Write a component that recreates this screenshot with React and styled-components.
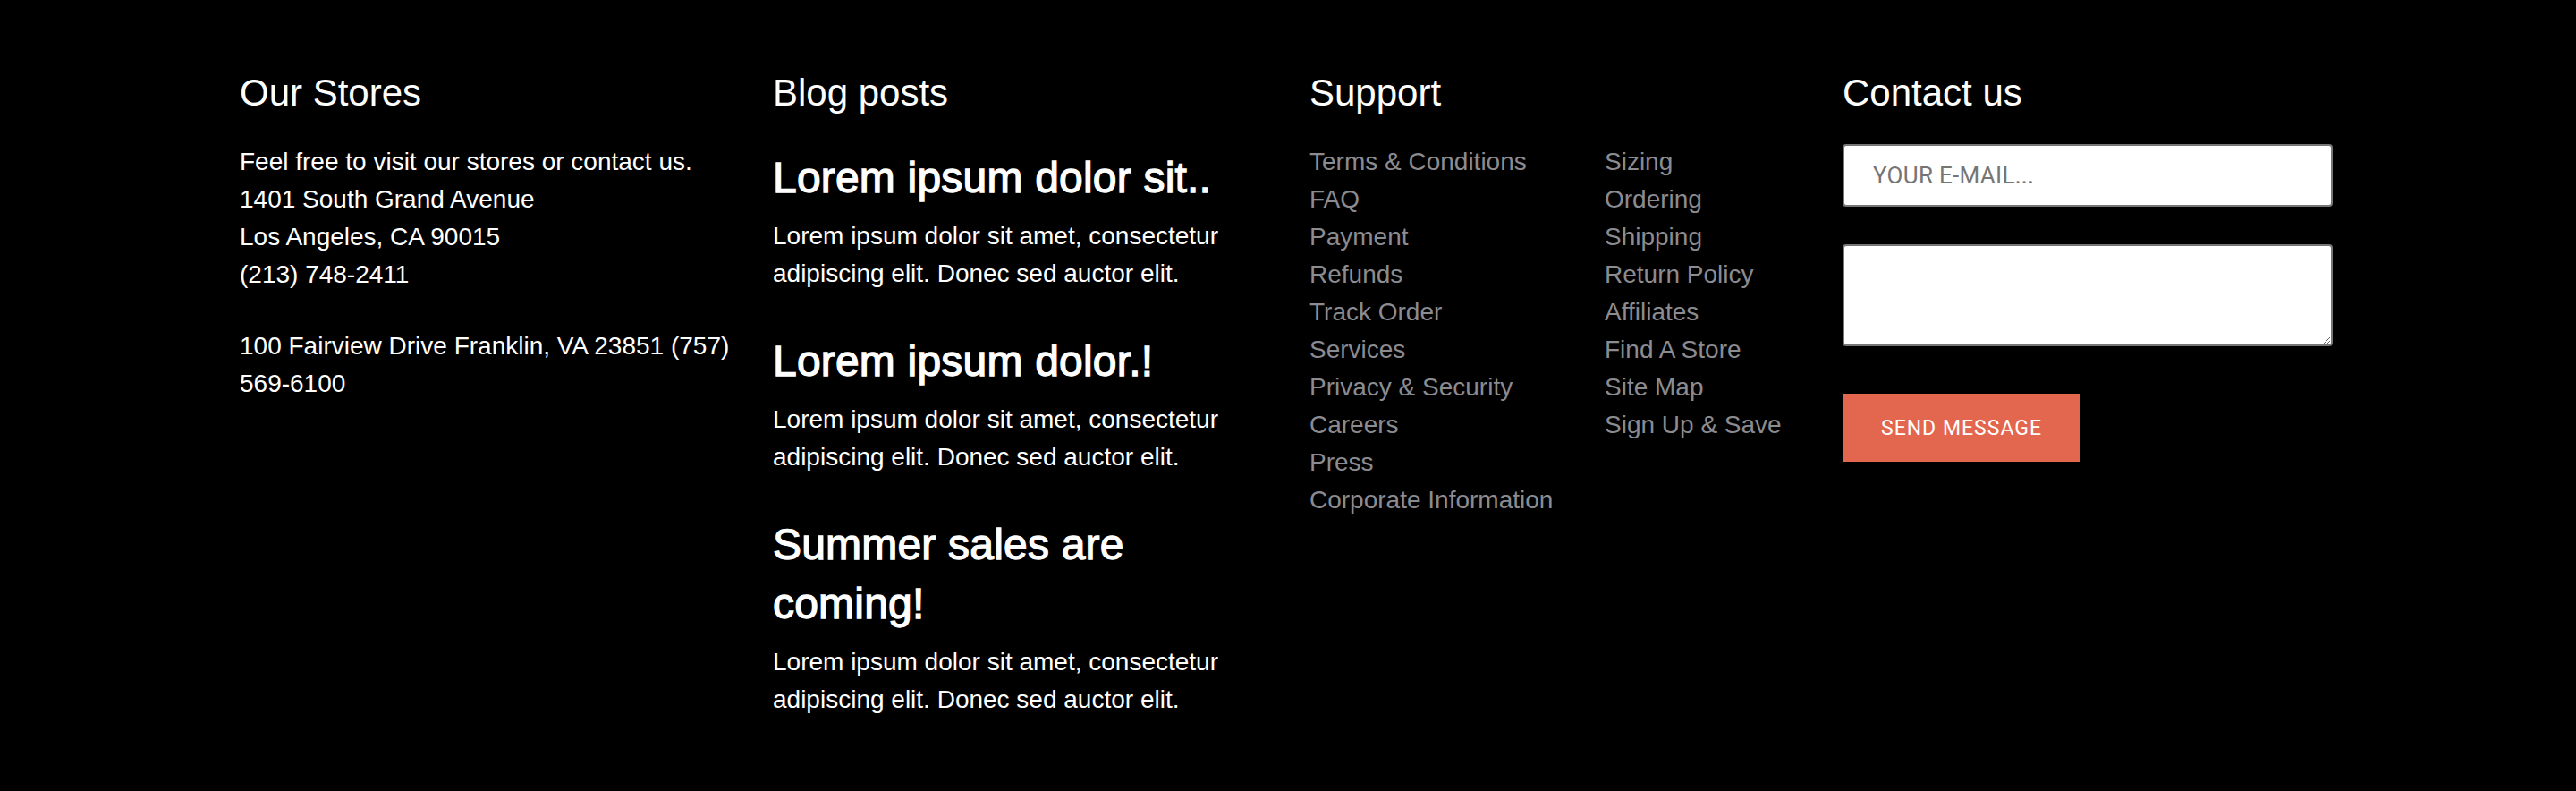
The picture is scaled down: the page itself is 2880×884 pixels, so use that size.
import React from 'react';
import styled, { createGlobalStyle } from 'styled-components';

const GlobalStyle = createGlobalStyle`
  html, body {
    margin: 0;
    padding: 0;
    background: #000;
  }
  body {
    font-family: 'Liberation Sans', Arial, sans-serif;
    color: #fff;
  }
`;

const stores = [
  'Feel free to visit our stores or contact us.',
  '1401 South Grand Avenue',
  'Los Angeles, CA 90015',
  '(213) 748-2411',
];

const posts = [
  'Lorem ipsum dolor sit..',
  'Lorem ipsum dolor.!',
  'Summer sales are coming!',
];

const supportLeft = [
  'Terms & Conditions',
  'FAQ',
  'Payment',
  'Refunds',
  'Track Order',
  'Services',
  'Privacy & Security',
  'Careers',
  'Press',
  'Corporate Information',
];

const supportRight = [
  'Sizing',
  'Ordering',
  'Shipping',
  'Return Policy',
  'Affiliates',
  'Find A Store',
  'Site Map',
  'Sign Up & Save',
];

const App = () => {
  return (
    <>
      <GlobalStyle />
      <Footer>
        <Columns>
          <Column>
            <Heading>Our Stores</Heading>
            <Text>
              {stores.map((line) => (
                <span key={line}>
                  {line}
                  <br />
                </span>
              ))}
            </Text>
            <Text spaced>100 Fairview Drive Franklin, VA 23851 (757) 569-6100</Text>
          </Column>

          <Column>
            <Heading>Blog posts</Heading>
            {posts.map((title, i) => (
              <Post key={title} first={i === 0}>
                <PostTitle>{title}</PostTitle>
                <Text>
                  Lorem ipsum dolor sit amet, consectetur adipiscing elit. Donec sed
                  auctor elit.
                </Text>
              </Post>
            ))}
          </Column>

          <Column>
            <Heading>Support</Heading>
            <LinkGrid>
              <LinkList>
                {supportLeft.map((l) => (
                  <li key={l}>
                    <a href='#'>{l}</a>
                  </li>
                ))}
              </LinkList>
              <LinkList>
                {supportRight.map((l) => (
                  <li key={l}>
                    <a href='#'>{l}</a>
                  </li>
                ))}
              </LinkList>
            </LinkGrid>
          </Column>

          <Column>
            <Heading>Contact us</Heading>
            <Form onSubmit={(e) => e.preventDefault()}>
              <Input type='email' placeholder='YOUR E-MAIL...' />
              <Message />
              <Button type='submit'>SEND MESSAGE</Button>
            </Form>
          </Column>
        </Columns>
      </Footer>
    </>
  );
};

export default App;

const Footer = styled.footer`
  background: #000;
  min-height: 884px;
  box-sizing: border-box;
  padding: 80px 0 0 268px;
`;

const Columns = styled.div`
  display: grid;
  grid-template-columns: 556px 560px 556px 548px;
  column-gap: 40px;
  align-items: start;
`;

const Column = styled.div`
  display: flex;
  flex-direction: column;
  min-width: 0;
`;

const Heading = styled.h3`
  margin: 0 0 32px;
  font-size: 42px;
  line-height: 48px;
  font-weight: 400;
  color: #fff;
`;

const Text = styled.p`
  margin: ${(p) => (p.spaced ? '38px' : '0')} 0 0;
  font-size: 28px;
  line-height: 42px;
  color: #fff;
`;

const Post = styled.div`
  margin-top: ${(p) => (p.first ? '0' : '38px')};
`;

const PostTitle = styled.h2`
  margin: 6px 0 11px;
  font-size: 48px;
  line-height: 66px;
  font-weight: 400;
  letter-spacing: 0.2px;
  -webkit-text-stroke: 1.3px #fff;
  color: #fff;
`;

const LinkGrid = styled.div`
  display: grid;
  grid-template-columns: 330px 1fr;
`;

const LinkList = styled.ul`
  list-style: none;
  margin: 0;
  padding: 0;

  li {
    font-size: 28px;
    line-height: 42px;
  }
  a {
    color: #8b8b90;
    text-decoration: none;
  }
`;

const Form = styled.form`
  display: flex;
  flex-direction: column;
  align-items: flex-start;
  margin-top: 1px;
`;

const Input = styled.input`
  box-sizing: border-box;
  width: 548px;
  height: 70px;
  padding: 0 32px;
  border: 2px solid #767676;
  border-radius: 4px;
  background: #fff;
  font-family: Roboto, 'Liberation Sans', sans-serif;
  font-size: 26px;
  letter-spacing: 0.3px;
  color: #333;
  outline: none;

  ::placeholder {
    color: #757575;
  }
`;

const Message = styled.textarea`
  box-sizing: border-box;
  width: 548px;
  height: 114px;
  margin-top: 42px;
  padding: 12px 32px;
  border: 2px solid #767676;
  border-radius: 4px;
  background: #fff;
  font-family: Roboto, 'Liberation Sans', sans-serif;
  font-size: 26px;
  outline: none;
`;

const Button = styled.button`
  margin-top: 53px;
  width: 266px;
  height: 76px;
  padding: 0;
  border: none;
  background: #e3664e;
  color: #fff;
  font-family: Roboto, 'Liberation Sans', sans-serif;
  font-size: 23px;
  letter-spacing: 1px;
  cursor: pointer;
`;
